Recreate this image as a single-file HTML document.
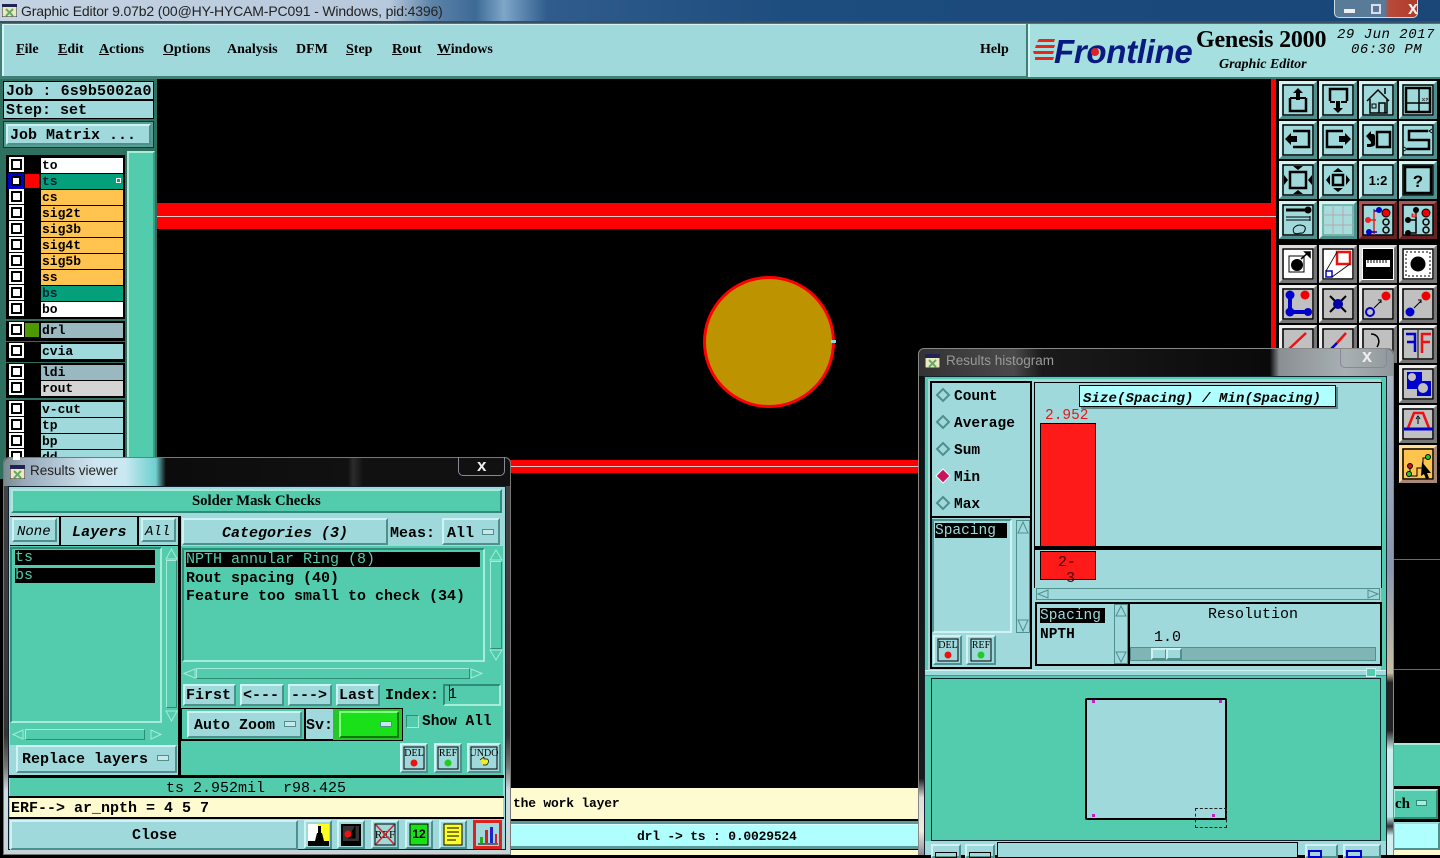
<!DOCTYPE html>
<html><head><meta charset="utf-8"><title>Graphic Editor</title>
<style>
html,body{margin:0;padding:0;width:1440px;height:855px;overflow:hidden;background:#000}
div,span,svg{position:absolute;box-sizing:border-box;display:block}
.t{white-space:pre;color:#000;line-height:1}
.m{font:bold 15px "Liberation Mono",monospace}
.l{font:bold 14px "Liberation Mono",monospace}
.i{font:italic bold 15px "Liberation Mono",monospace}
.s{font:bold 14px "Liberation Serif",serif}
.u{text-decoration:underline}
.b{background:#9fd9db;border:2px solid;border-color:#cdf3f3 #4f8f8e #4f8f8e #cdf3f3}
.g{background:#52ccac;border:2px solid;border-color:#a6ecd8 #2f8a78 #2f8a78 #a6ecd8}
.n{background:#52ccac;border:2px solid;border-color:#2f8a78 #a6ecd8 #a6ecd8 #2f8a78}
.k{background:#000}
.cb{width:15px;height:15px;background:#fff}
.cb:after{content:"";position:absolute;left:2px;top:2px;width:11px;height:11px;background:#000}
.cb i{position:absolute;left:4px;top:4px;width:7px;height:7px;background:#fff;z-index:2;display:block}
.ly{left:41px;width:82px;height:15px;font:bold 13px "Liberation Mono",monospace;padding:0 0 0 1px;line-height:15px;white-space:pre;color:#000}
.tb{width:38px;height:38px;background:#9fd9db;border:3px solid;border-color:#d5f5f5 #4f8f8e #4f8f8e #d5f5f5}
.gy{background:#c0c0c0;border-color:#eee #777 #777 #eee}
.wh{background:#fff;border-color:#ddd #777 #777 #ddd}
.tb svg{left:-3px;top:-3px;width:38px;height:38px}
.tb svg>rect:first-child{stroke-width:1.500}
.sb{background:#52ccac;border:1px solid #2f8a78}
.th{background:#52ccac;border:1px solid;border-color:#a6ecd8 #2f8a78 #2f8a78 #a6ecd8}
.sm{width:28px;height:30px;background:#9fd9db;border:2px solid;border-color:#cdf3f3 #4f8f8e #4f8f8e #cdf3f3}
</style></head><body>

<!-- title bar -->
<div style="left:0;top:0;width:1440px;height:23px;background:linear-gradient(90deg,#c4d3e2 0,#b7c9dc 27%,#5d83a8 30%,#3d6a96 33%,#7ea6c9 35%,#2f5c8c 38%,#1d4c7e 55%,#1a4678 100%);border-bottom:2px solid #39505f"></div>
<div class="t" style="left:21px;top:3px;font:14px 'Liberation Sans',sans-serif;color:#222;letter-spacing:-.15px">Graphic Editor 9.07b2 (00@HY-HYCAM-PC091 - Windows, pid:4396)</div>
<svg style="left:2px;top:4px" width="15" height="13"><rect width="15" height="13" fill="#eee8c0" stroke="#223" /><rect width="15" height="3" fill="#225"/><path d="M4 5l7 7M11 5l-7 7" stroke="#6a6" stroke-width="2"/></svg>
<div style="left:1334px;top:0;width:84px;height:18px;border:1px solid #cdd;border-top:0;border-radius:0 0 5px 5px;background:linear-gradient(90deg,#5a7b98 0,#5a7b98 60%,#b84a3a 66%,#b03a2c 100%)"></div>
<div style="left:1344px;top:9px;width:11px;height:4px;background:#eee"></div>
<div style="left:1371px;top:4px;width:10px;height:10px;border:2px solid #dde"></div>
<div class="t" style="left:1408px;top:-2px;font:bold 18px 'Liberation Sans';color:#eee">x</div>

<!-- menu bar -->
<div style="left:0;top:23px;width:1440px;height:56px;background:#3f7f76"></div>
<div style="left:2px;top:24px;width:1024px;height:52px;background:#9fd9db;border-left:2px solid #d5f5f5;border-top:1px solid #d5f5f5"></div>
<div class="t s" style="left:16px;top:42px"><span class="u" style="position:static;display:inline">F</span>ile</div>
<div class="t s" style="left:58px;top:42px"><span class="u" style="position:static;display:inline">E</span>dit</div>
<div class="t s" style="left:99px;top:42px"><span class="u" style="position:static;display:inline">A</span>ctions</div>
<div class="t s" style="left:163px;top:42px"><span class="u" style="position:static;display:inline">O</span>ptions</div>
<div class="t s" style="left:227px;top:42px">Analysis</div>
<div class="t s" style="left:296px;top:42px">DFM</div>
<div class="t s" style="left:346px;top:42px"><span class="u" style="position:static;display:inline">S</span>tep</div>
<div class="t s" style="left:392px;top:42px"><span class="u" style="position:static;display:inline">R</span>out</div>
<div class="t s" style="left:437px;top:42px"><span class="u" style="position:static;display:inline">W</span>indows</div>
<div class="t s" style="left:980px;top:42px">Help</div>

<div style="left:1028px;top:24px;width:412px;height:53px;background:#a6dfe0;border-left:2px solid #d5f5f5"></div>
<svg style="left:1033px;top:36px" width="24" height="26"><path d="M6 3h16l-1 3H4zM3 9h19l-1 3H2zM0 15h21l-1 3H1zM2 21h19l-1 3H2z" fill="#e8261c"/></svg>
<div class="t" style="left:1054px;top:33px;font:italic bold 33px 'Liberation Sans',sans-serif;color:#0a1a80;letter-spacing:-.3px">Frontline</div>
<div style="left:1091px;top:48px;width:8px;height:8px;background:#d22;border-radius:50%;z-index:3"></div>
<div class="t" style="left:1196px;top:27px;font:bold 24px 'Liberation Serif',serif;letter-spacing:-.2px">Genesis 2000</div>
<div class="t" style="left:1219px;top:57px;font:italic bold 14px 'Liberation Serif',serif">Graphic Editor</div>
<div class="t i" style="left:1337px;top:27px;font-size:14px;letter-spacing:.5px;font-weight:normal">29 Jun 2017</div>
<div class="t i" style="left:1351px;top:42px;font-size:14px;letter-spacing:.5px;font-weight:normal">06:30 PM</div>

<!-- canvas -->
<div style="left:157px;top:79px;width:1120px;height:710px;background:#000"></div>
<div style="left:1271px;top:79px;width:5px;height:270px;background:#f00"></div>
<div style="left:157px;top:203px;width:1119px;height:26px;background:#f00"></div>
<div style="left:157px;top:216px;width:1119px;height:1px;background:#e8c8c8"></div>
<div style="left:505px;top:460px;width:415px;height:13px;background:#f00"></div>
<div style="left:505px;top:466px;width:415px;height:1px;background:#e8c8c8"></div>
<div style="left:703px;top:276px;width:132px;height:132px;border-radius:50%;background:#bd9400;border:3px solid #f00"></div>
<div style="left:831px;top:340px;width:5px;height:3px;background:#8dd"></div>

<!-- left panel -->
<div style="left:0;top:79px;width:157px;height:400px;background:#2f6f60"></div>
<div style="left:3px;top:81px;width:151px;height:19px;background:#9fd9db;border:1px solid #000"></div>
<div class="t m" style="left:6px;top:83px;letter-spacing:.1px">Job : 6s9b5002a0</div>
<div style="left:3px;top:100px;width:151px;height:19px;background:#9fd9db;border:1px solid #000"></div>
<div class="t m" style="left:6px;top:102px">Step: set</div>
<div style="left:3px;top:121px;width:151px;height:27px;background:#52a090;border:1px solid #0a3a30"></div>
<div class="b" style="left:6px;top:124px;width:145px;height:21px"></div>
<div class="t m" style="left:10px;top:127px">Job Matrix ...</div>
<div style="left:127px;top:151px;width:28px;height:310px;background:#52ccac;border:2px solid;border-color:#a6ecd8 #3f9a88 #3f9a88 #a6ecd8"></div>
<div class="k" style="left:6px;top:155px;width:119px;height:164px"></div>
<div class="k" style="left:6px;top:321px;width:119px;height:20px"></div>
<div class="k" style="left:6px;top:342px;width:119px;height:20px"></div>
<div class="k" style="left:6px;top:363px;width:119px;height:35px"></div>
<div class="k" style="left:6px;top:400px;width:119px;height:60px"></div>

<div class="cb" style="left:9px;top:157px"><i></i></div><div class="ly" style="top:158px;background:#fff">to</div>
<div style="left:8px;top:173px;width:16px;height:16px;background:#00c"></div><div style="left:11px;top:176px;width:10px;height:10px;background:#000"></div><div style="left:13px;top:178px;width:6px;height:6px;background:#fff"></div>
<div style="left:25px;top:174px;width:14px;height:14px;background:#f00"></div><div class="ly" style="top:174px;background:#04a07c;color:#023">ts</div>
<div style="left:116px;top:178px;width:5px;height:5px;border:1px solid #fff"></div>
<div class="cb" style="left:9px;top:189px"><i></i></div><div class="ly" style="top:190px;background:#ffc44f">cs</div>
<div class="cb" style="left:9px;top:205px"><i></i></div><div class="ly" style="top:206px;background:#ffc44f">sig2t</div>
<div class="cb" style="left:9px;top:221px"><i></i></div><div class="ly" style="top:222px;background:#ffc44f">sig3b</div>
<div class="cb" style="left:9px;top:237px"><i></i></div><div class="ly" style="top:238px;background:#ffc44f">sig4t</div>
<div class="cb" style="left:9px;top:253px"><i></i></div><div class="ly" style="top:254px;background:#ffc44f">sig5b</div>
<div class="cb" style="left:9px;top:269px"><i></i></div><div class="ly" style="top:270px;background:#ffc44f">ss</div>
<div class="cb" style="left:9px;top:285px"><i></i></div><div class="ly" style="top:286px;background:#04a07c;color:#023">bs</div>
<div class="cb" style="left:9px;top:301px"><i></i></div><div class="ly" style="top:302px;background:#fff">bo</div>
<div class="cb" style="left:9px;top:322px"><i></i></div><div style="left:25px;top:323px;width:14px;height:14px;background:#4a9a00"></div><div class="ly" style="top:323px;background:#9ab8c0">drl</div>
<div class="cb" style="left:9px;top:343px"><i></i></div><div class="ly" style="top:344px;background:#9fd9db">cvia</div>
<div class="cb" style="left:9px;top:364px"><i></i></div><div class="ly" style="top:365px;background:#9ab8c0">ldi</div>
<div class="cb" style="left:9px;top:380px"><i></i></div><div class="ly" style="top:381px;background:#d4d4d4">rout</div>
<div class="cb" style="left:9px;top:401px"><i></i></div><div class="ly" style="top:402px;background:#9fd9db">v-cut</div>
<div class="cb" style="left:9px;top:417px"><i></i></div><div class="ly" style="top:418px;background:#9fd9db">tp</div>
<div class="cb" style="left:9px;top:433px"><i></i></div><div class="ly" style="top:434px;background:#9fd9db">bp</div>
<div class="cb" style="left:9px;top:449px"><i></i></div><div class="ly" style="top:450px;background:#9fd9db">dd</div>

<!-- tools -->
<div style="left:1277px;top:79px;width:163px;height:406px;background:#000"></div>
<div class="tb" style="left:1279px;top:81px"><svg viewBox="0 0 38 38"><rect x="4" y="4" width="30" height="30" fill="none" stroke="#000"/><path d="M11 17v13h16V17" fill="none" stroke="#000" stroke-width="2.500"/><path d="M19 7l5 5h-3v7h-4v-7h-3z M11 16h16v2H11z"/></svg></div>
<div class="tb" style="left:1319px;top:81px"><svg viewBox="0 0 38 38"><rect x="4" y="4" width="30" height="30" fill="none" stroke="#000"/><path d="M11 20V8h17v12" fill="none" stroke="#000" stroke-width="2.500"/><path d="M19 32l-5-5h3v-7h4v7h3zM11 20h5v2h-5zM22 20h6v2h-6z"/></svg></div>
<div class="tb" style="left:1359px;top:81px"><svg viewBox="0 0 38 38"><rect x="4" y="4" width="30" height="30" fill="none" stroke="#000"/><path d="M8 20L19 9l11 11M11 18v14h17V18M26 13V7M20 32V22h6v10" fill="none" stroke="#000" stroke-width="1.500"/><rect x="13" y="23" width="4" height="4" fill="none" stroke="#000"/></svg></div>
<div class="tb" style="left:1399px;top:81px"><svg viewBox="0 0 38 38"><rect x="4" y="4" width="30" height="30" fill="none" stroke="#000"/><rect x="7" y="7" width="24" height="24" fill="none" stroke="#000" stroke-width="2.500"/><path d="M20 7v24M7 22h24" stroke="#000" stroke-width="1.500"/><path d="M23 17l3 3M26 17l-3 3M27 17l2 1.500M29 17l-2 3" stroke="#444" stroke-width=".8"/></svg></div>

<div class="tb" style="left:1279px;top:121px"><svg viewBox="0 0 38 38"><rect x="4" y="4" width="30" height="30" fill="none" stroke="#000"/><path d="M14 10h16v16H14" fill="none" stroke="#000" stroke-width="2.500"/><path d="M6 18l6-6v3h6v6h-6v3z"/></svg></div>
<div class="tb" style="left:1319px;top:121px"><svg viewBox="0 0 38 38"><rect x="4" y="4" width="30" height="30" fill="none" stroke="#000"/><path d="M24 10H8v16h16" fill="none" stroke="#000" stroke-width="2.500"/><path d="M32 18l-6-6v3h-6v6h6v3z"/></svg></div>
<div class="tb" style="left:1359px;top:121px"><svg viewBox="0 0 38 38"><rect x="4" y="4" width="30" height="30" fill="none" stroke="#000"/><rect x="18" y="11" width="13" height="15" fill="none" stroke="#000" stroke-width="2.500"/><path d="M7 15l5-5v3h2c2 0 2 2 2 4v6c0 2-2 3-8 3v-3c3 0 4 0 4-1v-4H12v3z"/></svg></div>
<div class="tb" style="left:1399px;top:121px"><svg viewBox="0 0 38 38"><rect x="4" y="4" width="30" height="30" fill="none" stroke="#000"/><path d="M29 10H10v9h20v9H8" fill="none" stroke="#000" stroke-width="2.500"/><path d="M33 8l-3 2 3 2M5 26l3 2-3 2" fill="none" stroke="#000"/></svg></div>

<div class="tb" style="left:1279px;top:161px"><svg viewBox="0 0 38 38"><rect x="4" y="4" width="30" height="30" fill="none" stroke="#000"/><rect x="11" y="11" width="16" height="16" fill="none" stroke="#000" stroke-width="2.500"/><path d="M19 9l-5-4h10zM19 29l-5 4h10zM9 19l-4-5v10zM29 19l4-5v10z"/></svg></div>
<div class="tb" style="left:1319px;top:161px"><svg viewBox="0 0 38 38"><rect x="4" y="4" width="30" height="30" fill="none" stroke="#000"/><rect x="14" y="14" width="10" height="10" fill="none" stroke="#000" stroke-width="2.500"/><path d="M19 7l-5 4h10zM19 31l-5-4h10zM7 19l4-5v10zM31 19l-4-5v10z"/></svg></div>
<div class="tb" style="left:1359px;top:161px"><svg viewBox="0 0 38 38"><rect x="4" y="4" width="30" height="30" fill="none" stroke="#000"/><text x="19" y="24" text-anchor="middle" font-family="Liberation Sans" font-weight="bold" font-size="13">1:2</text></svg></div>
<div class="tb" style="left:1399px;top:161px"><svg viewBox="0 0 38 38"><rect x="4" y="4" width="30" height="30" fill="none" stroke="#000"/><rect x="6" y="6" width="26" height="26" fill="none" stroke="#000" stroke-width="2.500"/><text x="19" y="26" text-anchor="middle" font-family="Liberation Sans" font-weight="bold" font-size="17">?</text></svg></div>

<div class="tb" style="left:1279px;top:201px"><svg viewBox="0 0 38 38"><rect x="4" y="4" width="30" height="30" fill="none" stroke="#000"/><path d="M7 9h20" stroke="#000" stroke-width="3"/><circle cx="29" cy="9" r="3.500"/><path d="M7 16h24M7 19h24" stroke="#000"/><path d="M31 15v5" stroke="#000"/><path d="M15 32c-3-5 3-10 10-7 3 2 0 8-3 7-3 0-3 2-7 0z" fill="none" stroke="#000"/></svg></div>
<div class="tb" style="left:1319px;top:201px"><svg viewBox="0 0 38 38"><rect x="4" y="4" width="30" height="30" fill="#a6dcdc" stroke="#6a9"/><path d="M14 4v30M24 4v30M4 14h30M4 24h30" stroke="#b8a8b0"/></svg></div>
<div class="tb" style="left:1359px;top:201px;background:#a52a2a;border-color:#a55 #622 #622 #a55"><svg viewBox="0 0 38 38"><rect x="4" y="4" width="30" height="30" fill="#9fd9db" stroke="#000"/><path d="M9 19h8M15 8v26M15 19v12h-4" stroke="#d22" fill="none" stroke-width="1.500"/><circle cx="9" cy="19" r="3" fill="#e22"/><path d="M15 10h5M10 31h8" stroke="#00c" stroke-width="1.500"/><circle cx="20" cy="9" r="3" fill="#00c"/><circle cx="10" cy="31" r="3" fill="#00c"/><circle cx="27" cy="12" r="4" fill="#e00" stroke="#000"/><circle cx="27" cy="21" r="3" fill="none" stroke="#000" stroke-width="1.500"/><circle cx="27" cy="29" r="3" fill="none" stroke="#000" stroke-width="1.500"/></svg></div>
<div class="tb" style="left:1399px;top:201px;background:#a52a2a;border-color:#a55 #622 #622 #a55"><svg viewBox="0 0 38 38"><rect x="4" y="4" width="30" height="30" fill="#9fd9db" stroke="#000"/><path d="M9 19h8v-10M9 32h8V19" stroke="#000" fill="none" stroke-width="1.500"/><circle cx="9" cy="19" r="3"/><circle cx="17" cy="9" r="3"/><circle cx="9" cy="32" r="3"/><path d="M13 16v-3h1v3h2v-3h1v3" stroke="#d22" fill="none"/><circle cx="27" cy="12" r="4" fill="#e00" stroke="#000"/><circle cx="27" cy="21" r="3" fill="none" stroke="#000" stroke-width="1.500"/><circle cx="27" cy="29" r="3" fill="none" stroke="#000" stroke-width="1.500"/></svg></div>

<div class="tb wh" style="left:1279px;top:245px"><svg viewBox="0 0 38 38"><rect x="4" y="4" width="30" height="30" fill="#fff" stroke="#000"/><rect x="10" y="11" width="15" height="16" fill="none" stroke="#000"/><circle cx="18" cy="20" r="6"/><path d="M22 14l8-7M26 7h5v5z" stroke="#000" stroke-width="1.500"/></svg></div>
<div class="tb wh" style="left:1319px;top:245px"><svg viewBox="0 0 38 38"><rect x="4" y="4" width="30" height="30" fill="#fff" stroke="#000"/><rect x="18" y="7" width="13" height="12" fill="none" stroke="#e11" stroke-width="2.500"/><rect x="7" y="26" width="6" height="6" fill="none" stroke="#00c" stroke-width="1.500"/><path d="M7 26L18 7M13 32l18-13" stroke="#000" fill="none" stroke-width=".8"/></svg></div>
<div class="tb wh" style="left:1359px;top:245px"><svg viewBox="0 0 38 38"><rect x="4" y="4" width="30" height="30" fill="#000"/><rect x="7" y="15" width="24" height="7" fill="#fff"/><path d="M9 15v3M12 15v3M15 15v3M18 15v3M21 15v3M24 15v3M27 15v3" stroke="#000"/></svg></div>
<div class="tb wh" style="left:1399px;top:245px"><svg viewBox="0 0 38 38"><rect x="4" y="4" width="30" height="30" fill="#fff" stroke="#000"/><rect x="7" y="7" width="24" height="24" fill="none" stroke="#000" stroke-dasharray="2 2"/><circle cx="19" cy="19" r="7.500"/></svg></div>

<div class="tb gy" style="left:1279px;top:285px"><svg viewBox="0 0 38 38"><rect x="4" y="4" width="30" height="30" fill="none" stroke="#000"/><path d="M11 10v17h17" stroke="#00c" stroke-width="4" fill="none"/><circle cx="11" cy="10" r="4.500" fill="#00c"/><circle cx="11" cy="27" r="4.500" fill="#00c"/><circle cx="29" cy="27" r="4" fill="#00c"/><circle cx="26" cy="10" r="4.500" fill="#e00"/></svg></div>
<div class="tb gy" style="left:1319px;top:285px"><svg viewBox="0 0 38 38"><rect x="4" y="4" width="30" height="30" fill="none" stroke="#000"/><path d="M11 11l16 16M27 11L11 27" stroke="#000" stroke-width="2"/><circle cx="19" cy="19" r="5" fill="#00a"/></svg></div>
<div class="tb gy" style="left:1359px;top:285px"><svg viewBox="0 0 38 38"><rect x="4" y="4" width="30" height="30" fill="none" stroke="#000"/><circle cx="27" cy="11" r="4.500" fill="#e00"/><circle cx="11" cy="27" r="4" fill="none" stroke="#00c" stroke-width="2"/><path d="M15 23l7-7M19 15h3v3" stroke="#000" fill="none"/></svg></div>
<div class="tb gy" style="left:1399px;top:285px"><svg viewBox="0 0 38 38"><rect x="4" y="4" width="30" height="30" fill="none" stroke="#000"/><circle cx="27" cy="11" r="4.500" fill="#e00"/><circle cx="11" cy="27" r="4.500" fill="#00c"/><path d="M15 23l7-7M19 15h3v3" stroke="#000" fill="none"/></svg></div>

<div class="tb gy" style="left:1279px;top:325px"><svg viewBox="0 0 38 38"><rect x="4" y="4" width="30" height="30" fill="none" stroke="#000"/><path d="M10 24L27 8" stroke="#e11" stroke-width="2.500"/></svg></div>
<div class="tb gy" style="left:1319px;top:325px"><svg viewBox="0 0 38 38"><rect x="4" y="4" width="30" height="30" fill="none" stroke="#000"/><path d="M18 18L27 8" stroke="#e11" stroke-width="2.500"/><path d="M10 26l8-8" stroke="#00c" stroke-width="2.500"/></svg></div>
<div class="tb gy" style="left:1359px;top:325px"><svg viewBox="0 0 38 38"><rect x="4" y="4" width="30" height="30" fill="none" stroke="#000"/><path d="M12 9c7 0 10 7 6 13" stroke="#000" stroke-width="1.500" fill="none"/></svg></div>
<div class="tb gy" style="left:1399px;top:325px"><svg viewBox="0 0 38 38"><rect x="4" y="4" width="30" height="30" fill="none" stroke="#000"/><path d="M7 9h9v18M8 17h8" stroke="#00c" stroke-width="2.500" fill="none"/><path d="M19 5v28" stroke="#000"/><path d="M23 28V9h9M23 17h8" stroke="#e11" stroke-width="2.500" fill="none"/></svg></div>
<div class="tb gy" style="left:1399px;top:365px"><svg viewBox="0 0 38 38"><rect x="4" y="4" width="30" height="30" fill="none" stroke="#000"/><path d="M8 7h15v9h9v15H18v-7H8z" fill="#00c"/><circle cx="13" cy="12" r="4" fill="#c0c0c0"/><circle cx="24" cy="23" r="5" fill="#c0c0c0"/></svg></div>
<div class="tb gy" style="left:1399px;top:405px"><svg viewBox="0 0 38 38"><rect x="4" y="4" width="30" height="30" fill="none" stroke="#000"/><path d="M9 23L15 8h9l6 15" fill="none" stroke="#e11" stroke-width="2.500"/><path d="M5 24h29" stroke="#00c" stroke-width="3"/><path d="M19 19v-6M17 14l2-3 2 3" stroke="#000" fill="none"/></svg></div>
<div class="tb" style="left:1399px;top:445px;background:#ffc44f;border-color:#ffe09a #a87 #a87 #ffe09a"><svg viewBox="0 0 38 38"><rect x="4" y="4" width="30" height="30" fill="none" stroke="#000"/><path d="M11 22v9h7v-8h6V13h7" stroke="#000" fill="none"/><circle cx="11" cy="21" r="2.500" fill="#c11" stroke="#000"/><circle cx="10" cy="29" r="2.500" fill="#2c2" stroke="#000"/><circle cx="29" cy="12" r="2.500" fill="#2c2" stroke="#000"/><path d="M23 17l9 11-4 0 2 5-3 1-2-5-3 2z"/></svg></div>

<!-- right background strip -->
<div style="left:1393px;top:485px;width:47px;height:258px;background:#000"></div>
<div style="left:1393px;top:559px;width:47px;height:1px;background:#4a8a20"></div>
<div style="left:1393px;top:669px;width:47px;height:1px;background:#4a8a20"></div>
<div style="left:1393px;top:743px;width:47px;height:44px;background:#52ccac;border-top:2px solid #a6ecd8"></div>
<div style="left:1393px;top:786px;width:47px;height:36px;background:#000"></div>
<div class="g" style="left:1393px;top:789px;width:45px;height:30px"></div>
<div class="t" style="left:1395px;top:796px;font:15px 'Liberation Serif',serif;font-weight:bold">ch</div>
<div style="left:1416px;top:800px;width:11px;height:6px;background:#a6ecd8;border:1px solid #2f8a78"></div>
<div style="left:1393px;top:822px;width:47px;height:28px;background:#b0ffff;border:2px solid;border-color:#9fd9db #4f8f8e #4f8f8e #9fd9db"></div>
<div style="left:1393px;top:850px;width:47px;height:5px;background:#fffbd0"></div>

<!-- bottom middle -->
<div style="left:510px;top:788px;width:410px;height:31px;background:#fffbd0"></div>
<div class="t" style="left:513px;top:796px;font:bold 13px 'Liberation Mono',monospace;letter-spacing:-.2px">the work layer</div>
<div style="left:510px;top:819px;width:410px;height:2px;background:#000"></div>
<div style="left:510px;top:821px;width:410px;height:3px;background:#5a9a98"></div>
<div style="left:510px;top:824px;width:410px;height:22px;background:#b0ffff;border-top:1px solid #d5ffff"></div>
<div class="t" style="left:637px;top:829px;font:bold 13px 'Liberation Mono',monospace;letter-spacing:-.2px">drl -&gt; ts : 0.0029524</div>
<div style="left:510px;top:846px;width:410px;height:3px;background:#5a9a98"></div>
<div style="left:510px;top:849px;width:410px;height:6px;background:#fffbd0;border-top:1px solid #000"></div>

<!-- RESULTS VIEWER -->
<div style="left:3px;top:457px;width:508px;height:398px;background:linear-gradient(180deg,#444 0,#333 70%,#777 78%,#cfdce0 84%,#c6d4d8 100%);border:1px solid #777;border-radius:6px 6px 0 0"></div>
<div style="left:4px;top:458px;width:506px;height:28px;border-radius:6px 6px 0 0;background:linear-gradient(90deg,#7a8a8c 0,#9ab 4%,#cfe6ef 18%,#c9e8f2 24%,#8ad8d8 28%,#70d0d0 30%,#0c0c0c 32%,#111 68%,#2c2c2c 69%,#111 71%,#111 100%)"></div>
<svg style="left:10px;top:465px" width="15" height="14"><rect width="15" height="14" fill="#eee8c0" stroke="#223"/><rect width="15" height="4" fill="#225"/><path d="M4 6l7 7M11 6l-7 7" stroke="#6a6" stroke-width="2"/></svg>
<div class="t" style="left:30px;top:463px;font:13.500px 'Liberation Sans',sans-serif;color:#222">Results viewer</div>
<div style="left:458px;top:457px;width:47px;height:19px;border:1px solid #889;border-top:0;border-radius:0 0 5px 5px"></div>
<div class="t" style="left:477px;top:456px;font:bold 17px 'Liberation Sans';color:#eee">x</div>

<div style="left:8px;top:486px;width:498px;height:364px;background:#9fd9db;border:1px solid #123"></div>
<div class="g" style="left:11px;top:489px;width:491px;height:24px;text-align:center"></div>
<div class="t s" style="left:192px;top:493px;font-size:14.700px">Solder Mask Checks</div>

<div class="k" style="left:10px;top:516px;width:171px;height:30px"></div>
<div style="left:10px;top:517px;width:49px;height:28px;background:#9fd9db"></div>
<div class="b" style="left:12px;top:518px;width:45px;height:24px"></div>
<div class="t i" style="left:17px;top:524px;font-weight:normal;font-size:14px">None</div>
<div style="left:61px;top:517px;width:76px;height:28px;background:#9fd9db"></div>
<div class="t i" style="left:72px;top:524px;letter-spacing:.1px">Layers</div>
<div style="left:139px;top:517px;width:39px;height:28px;background:#9fd9db"></div>
<div class="b" style="left:141px;top:518px;width:35px;height:24px"></div>
<div class="t i" style="left:145px;top:524px;font-weight:normal;font-size:14px">All</div>
<div class="k" style="left:178px;top:516px;width:3px;height:260px"></div>
<div class="b" style="left:182px;top:518px;width:206px;height:27px"></div>
<div class="t i" style="left:222px;top:525px">Categories (3)</div>
<div class="t m" style="left:390px;top:525px">Meas:</div>
<div class="b" style="left:442px;top:518px;width:58px;height:27px"></div>
<div class="t m" style="left:447px;top:525px">All</div>
<div style="left:482px;top:529px;width:12px;height:6px;background:#c8e8e8;border:1px solid #4f8f8e"></div>

<!-- left list -->
<div style="left:10px;top:546px;width:168px;height:199px;background:#52ccac"></div>
<div class="n" style="left:10px;top:547px;width:152px;height:176px;border-color:#2f8a78 #a6ecd8 #a6ecd8 #2f8a78"></div>
<div class="k t m" style="left:15px;top:550px;width:140px;height:15px;color:#52ccac;line-height:15px;font-weight:normal">ts</div>
<div class="k t m" style="left:15px;top:568px;width:140px;height:15px;color:#52ccac;line-height:15px;font-weight:normal">bs</div>
<div class="th" style="left:166px;top:560px;width:11px;height:148px"></div>
<svg style="left:165px;top:547px" width="13" height="176"><path d="M6.500 2L12 12H1z M6.500 174L12 164H1z" fill="#52ccac" stroke="#a6ecd8"/></svg>
<div class="th" style="left:25px;top:729px;width:120px;height:11px"></div>
<svg style="left:11px;top:729px" width="152" height="11"><path d="M2 5.500L12 1v9z M150 5.500L140 1v9z" fill="#52ccac" stroke="#a6ecd8"/></svg>
<div class="b" style="left:16px;top:745px;width:161px;height:28px"></div>
<div class="t m" style="left:22px;top:751px">Replace layers</div>
<div style="left:157px;top:755px;width:12px;height:6px;background:#c8e8e8;border:1px solid #4f8f8e"></div>

<!-- right list -->
<div style="left:181px;top:546px;width:322px;height:230px;background:#52ccac"></div>
<div class="n" style="left:182px;top:548px;width:303px;height:114px"></div>
<div class="k t m" style="left:186px;top:552px;width:294px;height:15px;color:#52ccac;line-height:15px;font-weight:normal">NPTH annular Ring (8)</div>
<div class="t m" style="left:186px;top:570px">Rout spacing (40)</div>
<div class="t m" style="left:186px;top:588px">Feature too small to check (34)</div>
<div class="th" style="left:490px;top:561px;width:12px;height:88px"></div>
<svg style="left:489px;top:548px" width="14" height="114"><path d="M7 2L13 12H1z M7 112L13 102H1z" fill="#52ccac" stroke="#a6ecd8"/></svg>
<div class="th" style="left:196px;top:668px;width:274px;height:11px"></div>
<svg style="left:183px;top:668px" width="300" height="11"><path d="M1 5.500L12 1v9z M299 5.500L288 1v9z" fill="#52ccac" stroke="#a6ecd8"/></svg>
<div class="b" style="left:183px;top:684px;width:53px;height:22px"></div><div class="t m" style="left:186px;top:687px">First</div>
<div class="b" style="left:240px;top:684px;width:44px;height:22px"></div><div class="t m" style="left:243px;top:687px">&lt;---</div>
<div class="b" style="left:288px;top:684px;width:44px;height:22px"></div><div class="t m" style="left:291px;top:687px">---&gt;</div>
<div class="b" style="left:336px;top:684px;width:44px;height:22px"></div><div class="t m" style="left:339px;top:687px">Last</div>
<div class="t m" style="left:385px;top:687px">Index:</div>
<div class="n" style="left:443px;top:684px;width:58px;height:22px"></div>
<div class="t m" style="left:448px;top:686px;font-weight:normal">1</div>
<div style="left:449px;top:685px;width:1px;height:16px;background:#222"></div>
<div class="k" style="left:181px;top:708px;width:222px;height:33px"></div>
<div style="left:182px;top:709px;width:122px;height:30px;background:#52ccac"></div>
<div class="b" style="left:187px;top:711px;width:115px;height:27px"></div>
<div class="t m" style="left:194px;top:717px">Auto Zoom</div>
<div style="left:284px;top:721px;width:12px;height:6px;background:#c8e8e8;border:1px solid #4f8f8e"></div>
<div style="left:306px;top:709px;width:27px;height:30px;background:#9fd9db"></div>
<div class="t m" style="left:306px;top:717px">Sv:</div>
<div style="left:333px;top:709px;width:69px;height:31px;background:#26c626"></div>
<div style="left:339px;top:711px;width:60px;height:27px;background:#1ae01a;border:2px solid;border-color:#80ff80 #10780f #10780f #80ff80"></div>
<div style="left:380px;top:721px;width:12px;height:6px;background:#c8e8e8;border:1px solid #4f8f8e"></div>
<div style="left:406px;top:715px;width:13px;height:13px;background:#52ccac;border:1px solid;border-color:#2f8a78 #a6ecd8 #a6ecd8 #2f8a78"></div>
<div class="t l" style="left:422px;top:714px;font-size:14.500px">Show All</div>

<div class="sm" style="left:400px;top:743px"><svg width="24" height="26" style="left:0;top:0"><rect x="2" y="2" width="20" height="22" fill="none" stroke="#000"/><text x="12" y="11" text-anchor="middle" font-family="Liberation Serif" font-size="10">DEL</text><circle cx="12" cy="18" r="3.500" fill="#e11"/></svg></div>
<div class="sm" style="left:434px;top:743px"><svg width="24" height="26" style="left:0;top:0"><rect x="2" y="2" width="20" height="22" fill="none" stroke="#000"/><text x="12" y="11" text-anchor="middle" font-family="Liberation Serif" font-size="10">REF</text><circle cx="12" cy="18" r="3.500" fill="#2c2"/></svg></div>
<div class="sm" style="left:467px;top:743px;width:34px"><svg width="30" height="26" style="left:0;top:0"><rect x="2" y="2" width="26" height="22" fill="none" stroke="#000"/><text x="15" y="11" text-anchor="middle" font-family="Liberation Serif" font-size="10">UNDO</text><path d="M11 15l4-3v2h3c2 0 2 5-1 6h-3" fill="#ee2" stroke="#000" stroke-width=".7"/></svg></div>

<div class="k" style="left:9px;top:775px;width:495px;height:3px"></div>
<div style="left:10px;top:778px;width:493px;height:18px;background:#52ccac"></div>
<div class="t m" style="left:166px;top:780px;font-weight:normal">ts 2.952mil  r98.425</div>
<div class="k" style="left:9px;top:796px;width:495px;height:2px"></div>
<div style="left:10px;top:798px;width:493px;height:19px;background:#fffbd0"></div>
<div class="t m" style="left:11px;top:800px;font-weight:bold">ERF--&gt; ar_npth = 4 5 7</div>
<div class="k" style="left:9px;top:817px;width:495px;height:2px"></div>
<div class="b" style="left:10px;top:820px;width:288px;height:30px"></div>
<div class="t m" style="left:132px;top:827px">Close</div>

<div class="sm" style="left:304px;top:820px;height:29px"><svg width="24" height="25" style="left:0;top:0"><rect x="2" y="2" width="10" height="20" fill="#fff"/><rect x="12" y="2" width="11" height="20" fill="#ff2"/><path d="M2 24V19h7l2-8h1v-7h3v7h1l2 8h5v5z"/></svg></div>
<div class="sm" style="left:337px;top:820px;height:29px"><svg width="24" height="25" style="left:0;top:0"><rect x="2" y="2" width="20" height="22" fill="#000"/><rect x="4" y="4" width="16" height="15" fill="#333"/><path d="M16 4v12H9" stroke="#000"/><circle cx="9" cy="12" r="3.500" fill="#e11"/></svg></div>
<div class="sm" style="left:371px;top:820px;height:29px"><svg width="24" height="25" style="left:0;top:0"><rect x="2" y="2" width="20" height="21" fill="none" stroke="#000"/><text x="12" y="16" text-anchor="middle" font-family="Liberation Serif" font-size="11">REF</text><path d="M3 3l18 19M21 3L3 22" stroke="#d22" stroke-width="1.500"/></svg></div>
<div class="sm" style="left:405px;top:820px;height:29px"><svg width="24" height="25" style="left:0;top:0"><rect x="3" y="2" width="18" height="21" fill="#1ae01a" stroke="#000"/><text x="12" y="16" text-anchor="middle" font-family="Liberation Sans" font-weight="bold" font-size="12">12</text></svg></div>
<div class="sm" style="left:439px;top:820px;height:29px"><svg width="24" height="25" style="left:0;top:0"><rect x="3" y="2" width="18" height="21" fill="#ff2" stroke="#000"/><path d="M6 6h12M6 10h12M6 14h12M6 18h9" stroke="#000"/></svg></div>
<div class="sm" style="left:473px;top:820px;height:29px;border-color:#d22;background:#d22;width:29px"><svg width="25" height="25" style="left:0;top:0"><rect x="1" y="1" width="23" height="23" fill="#9fd9db"/><path d="M5 21v-6h3v6z" fill="#2a2"/><path d="M10 21V8h3v13z" fill="#c22"/><path d="M15 21V5h3v16z" fill="#22c"/><path d="M20 21v-9h2v9z" fill="#c22"/><path d="M3 22h20" stroke="#000"/></svg></div>

<!-- RESULTS HISTOGRAM -->
<div style="left:918px;top:348px;width:476px;height:507px;background:#222;border:1px solid #888;border-radius:6px 6px 0 0"></div>
<div style="left:919px;top:376px;width:6px;height:479px;background:linear-gradient(180deg,#111 0,#1a1a1a 84%,#ddd 88%,#f0ecd8 95%,#889 100%)"></div>
<div style="left:1387px;top:376px;width:6px;height:479px;background:linear-gradient(180deg,#a8b8c4 0,#8a98b0 40%,#c8c0a0 62%,#222 64%,#222 74%,#d0f0f0 78%,#b8e8e8 92%,#333 94%,#d0f0f0 96%)"></div>
<div style="left:919px;top:349px;width:474px;height:27px;border-radius:6px 6px 0 0;background:linear-gradient(90deg,#333 0,#4a4a4a 20%,#1a1a1a 26%,#0a0a0a 74%,#8a8f92 76%,#a8b0b4 90%,#90989c 100%)"></div>
<svg style="left:925px;top:354px" width="15" height="14"><rect width="15" height="14" fill="#eee8c0" stroke="#223"/><rect width="15" height="4" fill="#225"/><path d="M4 6l7 7M11 6l-7 7" stroke="#6a6" stroke-width="2"/></svg>
<div class="t" style="left:946px;top:353px;font:13.500px 'Liberation Sans',sans-serif;color:#999">Results histogram</div>
<div style="left:1340px;top:349px;width:47px;height:19px;border:1px solid #889;border-top:0;border-radius:0 0 5px 5px"></div>
<div class="t" style="left:1362px;top:346px;font:bold 18px 'Liberation Sans';color:#eee">x</div>

<div style="left:924px;top:376px;width:463px;height:479px;background:#52ccac;border:1px solid #123"></div>
<div style="left:928px;top:379px;width:453px;height:291px;background:#9fd9db"></div>
<!-- radios -->
<div style="left:930px;top:381px;width:102px;height:137px;background:#9fd9db;border:2px solid #000"></div>
<svg style="left:935px;top:387px" width="16" height="130"><g fill="#9fd9db" stroke="#4f8f8e" stroke-width="2"><path d="M8 2l6 6-6 6-6-6z"/><path d="M8 29l6 6-6 6-6-6z"/><path d="M8 56l6 6-6 6-6-6z"/><path d="M8 110l6 6-6 6-6-6z"/></g><path d="M8 82l7 7-7 7-7-7z" fill="#c8145a" stroke="#eaffff"/></svg>
<div class="t m" style="left:954px;top:389px;font-size:14.500px">Count</div>
<div class="t m" style="left:954px;top:416px;font-size:14.500px">Average</div>
<div class="t m" style="left:954px;top:443px;font-size:14.500px">Sum</div>
<div class="t m" style="left:954px;top:470px;font-size:14.500px">Min</div>
<div class="t m" style="left:954px;top:497px;font-size:14.500px">Max</div>
<div style="left:930px;top:518px;width:102px;height:151px;background:#9fd9db;border:2px solid #000;border-top:0"></div>
<div style="left:932px;top:519px;width:80px;height:114px;background:#9fd9db;border:2px solid;border-color:#4f8f8e #cdf3f3 #cdf3f3 #4f8f8e"></div>
<div class="k t m" style="left:935px;top:523px;width:72px;height:15px;color:#9fd9db;line-height:16px;font-size:14.500px;font-weight:normal">Spacing</div>
<div style="left:1016px;top:520px;width:14px;height:113px;background:#9fd9db;border:1px solid #4f8f8e"></div>
<svg style="left:1017px;top:521px" width="12" height="111"><path d="M6 1L11 12H1z M6 110L11 99H1z" fill="#9fd9db" stroke="#4f8f8e"/></svg>
<div class="sm" style="left:933px;top:635px;width:29px"><svg width="25" height="26" style="left:0;top:0"><rect x="3" y="2" width="20" height="22" fill="none" stroke="#000"/><text x="13" y="11" text-anchor="middle" font-family="Liberation Serif" font-size="10">DEL</text><circle cx="13" cy="18" r="3.500" fill="#e11"/></svg></div>
<div class="sm" style="left:966px;top:635px;width:30px"><svg width="26" height="26" style="left:0;top:0"><rect x="3" y="2" width="20" height="22" fill="none" stroke="#000"/><text x="13" y="11" text-anchor="middle" font-family="Liberation Serif" font-size="10">REF</text><circle cx="13" cy="18" r="3.500" fill="#2c2"/></svg></div>

<!-- chart -->
<div style="left:1034px;top:382px;width:348px;height:206px;background:#9fd9db;border:1px solid #000;border-bottom:0"></div>
<div style="left:1079px;top:385px;width:257px;height:22px;background:#b0ffff;border:1px solid #000;box-shadow:2px 2px 0 #5a8a8a"></div>
<div class="t i" style="left:1083px;top:391px;font-size:14px;letter-spacing:.1px">Size(Spacing) / Min(Spacing)</div>
<div class="t m" style="left:1045px;top:408px;color:#e01a1a;font-weight:normal;font-size:14.500px">2.952</div>
<div style="left:1040px;top:423px;width:56px;height:124px;background:#ff1a1a;border:1px solid #000;border-bottom:0"></div>
<div class="k" style="left:1034px;top:546px;width:348px;height:4px"></div>
<div style="left:1040px;top:551px;width:56px;height:29px;background:#ff1a1a;border:1px solid #000"></div>
<div class="t m" style="left:1058px;top:554px;font-weight:normal;color:#400">2-</div>
<div class="t m" style="left:1066px;top:570px;font-weight:normal;color:#400">3</div>
<div style="left:1036px;top:588px;width:344px;height:12px;background:#9fd9db;border:1px solid #4f8f8e"></div>
<svg style="left:1037px;top:589px" width="342" height="10"><path d="M1 5L11 1v8z M341 5L331 1v8z" fill="#9fd9db" stroke="#4f8f8e"/></svg>
<div style="left:1035px;top:602px;width:347px;height:64px;background:#9fd9db;border:2px solid #000"></div>
<div class="k t m" style="left:1040px;top:608px;width:65px;height:15px;color:#9fd9db;line-height:16px;font-size:14.500px;font-weight:normal">Spacing</div>
<div class="t m" style="left:1040px;top:627px;font-size:14.500px">NPTH</div>
<div style="left:1114px;top:604px;width:14px;height:60px;background:#9fd9db;border:1px solid #4f8f8e"></div>
<svg style="left:1115px;top:605px" width="12" height="58"><path d="M6 1L11 11H1z M6 57L11 47H1z" fill="#9fd9db" stroke="#4f8f8e"/></svg>
<div class="k" style="left:1128px;top:603px;width:2px;height:62px"></div>
<div class="t m" style="left:1208px;top:606px;font-weight:normal">Resolution</div>
<div class="t m" style="left:1154px;top:629px;font-weight:normal">1.0</div>
<div style="left:1130px;top:647px;width:246px;height:14px;background:#7fb5b5;border:1px solid #4f8f8e"></div>
<div class="b" style="left:1151px;top:648px;width:16px;height:12px"></div>
<div class="b" style="left:1166px;top:648px;width:16px;height:12px"></div>

<!-- sash -->
<div style="left:925px;top:670px;width:461px;height:6px;background:#9fd9db;border-top:1px solid #cdf3f3;border-bottom:1px solid #4f8f8e"></div>
<div style="left:1366px;top:668px;width:10px;height:9px;background:#52ccac;border:1px solid #cdf3f3"></div>

<!-- preview -->
<div style="left:931px;top:678px;width:450px;height:163px;background:#52ccac;border:1px solid #123"></div>
<div style="left:1085px;top:698px;width:142px;height:122px;background:#9fd9db;border:2px solid #000;border-radius:2px"></div>
<div style="left:1092px;top:700px;width:3px;height:3px;background:#c81ec8"></div>
<div style="left:1219px;top:700px;width:3px;height:3px;background:#c81ec8"></div>
<div style="left:1092px;top:814px;width:3px;height:3px;background:#c81ec8"></div>
<div style="left:1212px;top:814px;width:3px;height:3px;background:#c81ec8"></div>
<div style="left:1195px;top:808px;width:32px;height:20px;border:1px dashed #222"></div>

<!-- bottom hist -->
<div style="left:925px;top:841px;width:461px;height:14px;background:#9fd9db"></div>
<div class="b" style="left:931px;top:844px;width:30px;height:14px"></div>
<div style="left:935px;top:852px;width:22px;height:6px;border:1px solid #000"></div>
<div class="b" style="left:965px;top:844px;width:30px;height:14px"></div>
<div style="left:969px;top:852px;width:22px;height:6px;border:1px solid #000"></div>
<div style="left:997px;top:842px;width:301px;height:16px;background:#9fd9db;border:1px solid #000"></div>
<div class="b" style="left:1305px;top:844px;width:33px;height:14px"></div>
<div style="left:1308px;top:850px;width:14px;height:8px;border:2px solid #00c"></div>
<div class="b" style="left:1343px;top:844px;width:38px;height:14px"></div>
<div style="left:1346px;top:850px;width:16px;height:8px;border:2px solid #00c"></div>
</body></html>
